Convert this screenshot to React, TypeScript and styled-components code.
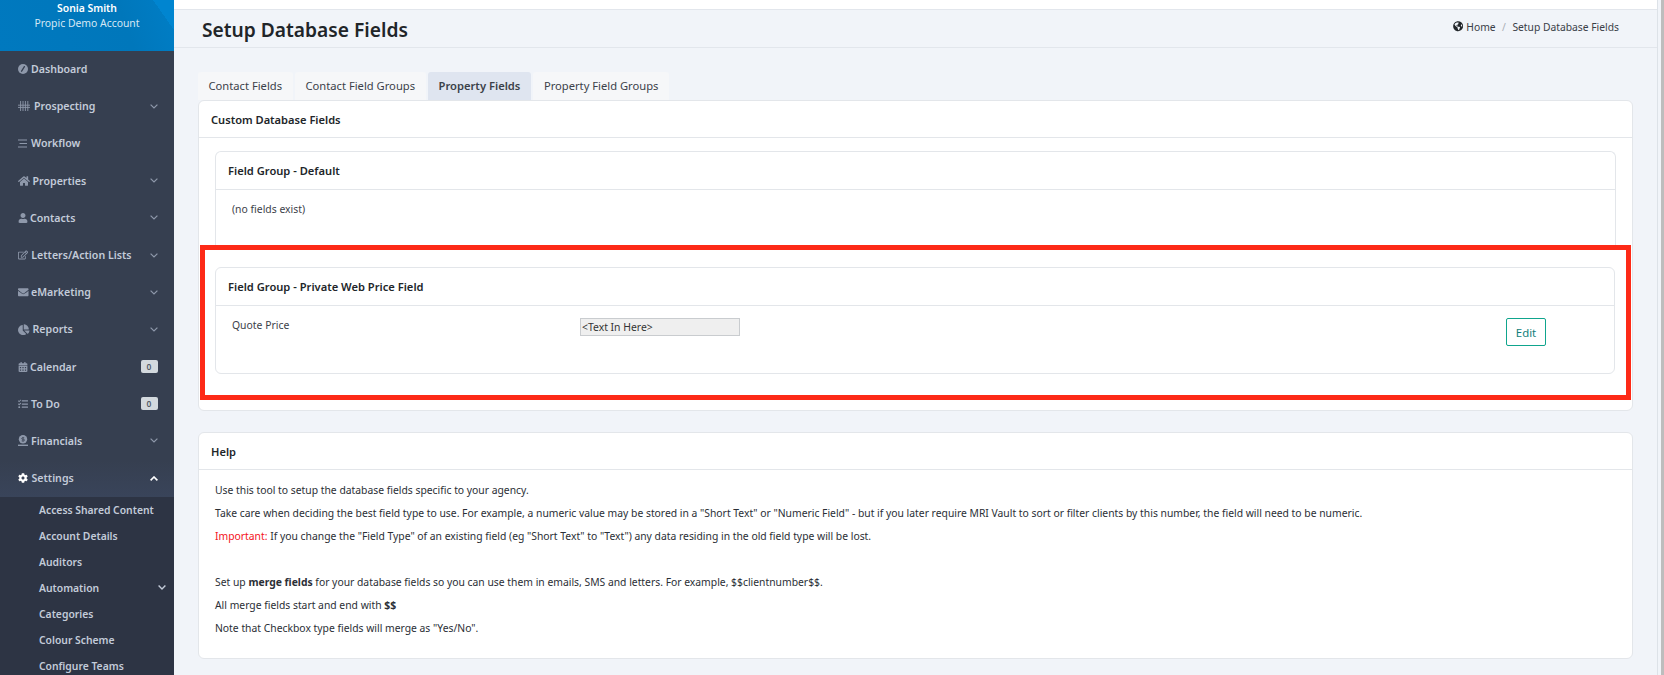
import React from "react";
import styled, { createGlobalStyle } from "styled-components";
import {
  FaCalendarAlt,
  FaChartPie,
  FaCog,
  FaEnvelope,
  FaGlobeAmericas,
  FaHome,
  FaRegEdit,
  FaTasks,
  FaUser,
} from "react-icons/fa";

const DialIcon = () => (
  <svg width="10" height="10" viewBox="0 0 10 10">
    <circle cx="5" cy="5" r="5" fill="currentColor" />
    <path d="M3.6 7.2 6.4 2.6" stroke="#363f50" strokeWidth="1.3" strokeLinecap="round" />
  </svg>
);

const TallyIcon = () => (
  <svg width="12" height="10" viewBox="0 0 12 10" fill="none" stroke="currentColor" strokeWidth="0.9">
    <path d="M2.6 0v10M5 0v10M7.4 0v10M9.8 0v10M0 4.2h12M0 6.4h12" />
  </svg>
);

const LinesIcon = () => (
  <svg width="9" height="9" viewBox="0 0 9 9" fill="none" stroke="currentColor" strokeWidth="1">
    <path d="M0 1h9M1.5 4.5h7.5M0 8h9" />
  </svg>
);

const FinanceIcon = () => (
  <svg width="10" height="11" viewBox="0 0 10 11">
    <circle cx="5" cy="4.3" r="4.2" fill="currentColor" />
    <path d="M6.3 2.8H4.2a.8.8 0 0 0 0 1.5h1.5a.8.8 0 0 1 0 1.6H3.6M5 1.9v4.9" fill="none" stroke="#363f50" strokeWidth="0.7" />
    <path d="M0 9.6h10V11H0z" fill="currentColor" />
  </svg>
);

const Chevron = ({ up, weight = 1.2 }: { up?: boolean; weight?: number }) => (
  <svg width="8" height="5" viewBox="0 0 8 5" fill="none" stroke="currentColor" strokeWidth={weight}>
    <path d={up ? "M.6 4.4 4 1l3.4 3.4" : "M.6.6 4 4 7.4.6"} />
  </svg>
);

const menu = [
  { label: "Dashboard", icon: <DialIcon /> },
  { label: "Prospecting", icon: <TallyIcon />, gap: 4, arrow: true },
  { label: "Workflow", icon: <LinesIcon />, gap: 4 },
  { label: "Properties", icon: <FaHome />, size: 12, gap: 2.6, arrow: true },
  { label: "Contacts", icon: <FaUser />, size: 10, gap: 2, arrow: true },
  { label: "Letters/Action Lists", icon: <FaRegEdit />, size: 10, gap: 3.3, arrow: true },
  { label: "eMarketing", icon: <FaEnvelope />, size: 10.5, gap: 2.5, arrow: true },
  { label: "Reports", icon: <FaChartPie />, size: 11.5, gap: 3, arrow: true },
  { label: "Calendar", icon: <FaCalendarAlt />, size: 10, gap: 2, badge: "0" },
  { label: "To Do", icon: <FaTasks />, size: 10, badge: "0" },
  { label: "Financials", icon: <FinanceIcon />, arrow: true },
];

const subMenu = [
  "Access Shared Content",
  "Account Details",
  "Auditors",
  "Automation",
  "Categories",
  "Colour Scheme",
  "Configure Teams",
];

const tabs = ["Contact Fields", "Contact Field Groups", "Property Fields", "Property Field Groups"];

const App: React.FC = () => {
  return (
    <Page>
      <GlobalStyle />
      <Sidebar>
        <Profile>
          <ProfileName>Sonia Smith</ProfileName>
          <ProfileAccount>Propic Demo Account</ProfileAccount>
        </Profile>
        <Menu>
          {menu.map((item) => (
            <MenuItem key={item.label}>
              <MenuIcon $size={item.size} $gap={item.gap}>
                {item.icon}
              </MenuIcon>
              <MenuLabel>{item.label}</MenuLabel>
              {item.arrow && (
                <Arrow>
                  <Chevron />
                </Arrow>
              )}
              {item.badge && <Badge>{item.badge}</Badge>}
            </MenuItem>
          ))}
          <ActiveItem>
            <MenuIcon $light $size={10} $gap={3.5}>
              <FaCog />
            </MenuIcon>
            <MenuLabel>Settings</MenuLabel>
            <Arrow $light>
              <Chevron up weight={1.6} />
            </Arrow>
          </ActiveItem>
          <SubMenu>
            {subMenu.map((label) => (
              <SubItem key={label}>
                {label}
                {label === "Automation" && (
                  <SubArrow>
                    <Chevron weight={1.4} />
                  </SubArrow>
                )}
              </SubItem>
            ))}
          </SubMenu>
        </Menu>
      </Sidebar>
      <Main>
        <TopBar />
        <PageHeader>
          <Title>Setup Database Fields</Title>
          <Breadcrumb>
            <FaGlobeAmericas />
            <span>Home</span>
            <Slash>/</Slash>
            <span>Setup Database Fields</span>
          </Breadcrumb>
        </PageHeader>
        <Content>
          <Tabs>
            {tabs.map((tab) => (
              <Tab key={tab} $active={tab === "Property Fields"}>
                {tab}
              </Tab>
            ))}
          </Tabs>
          <FieldsCard>
            <CardHeader>Custom Database Fields</CardHeader>
            <FieldsBody>
              <DefaultGroup>
                <GroupHeader>Field Group - Default</GroupHeader>
                <EmptyNote>(no fields exist)</EmptyNote>
              </DefaultGroup>
              <Highlight>
                <PriceGroup>
                  <GroupHeader>Field Group - Private Web Price Field</GroupHeader>
                  <FieldRow>
                    <FieldName>Quote Price</FieldName>
                    <FieldInput>&lt;Text In Here&gt;</FieldInput>
                    <EditButton>Edit</EditButton>
                  </FieldRow>
                </PriceGroup>
              </Highlight>
            </FieldsBody>
          </FieldsCard>
          <HelpCard>
            <CardHeader>Help</CardHeader>
            <HelpBody>
              <HelpLine>Use this tool to setup the database fields specific to your agency.</HelpLine>
              <HelpLine>
                Take care when deciding the best field type to use. For example, a numeric value may be stored in a
                "Short Text" or "Numeric Field" - but if you later require MRI Vault to sort or filter clients by this
                number, the field will need to be numeric.
              </HelpLine>
              <HelpLine>
                <Important>Important:</Important> If you change the "Field Type" of an existing field (eg "Short Text"
                to "Text") any data residing in the old field type will be lost.
              </HelpLine>
              <HelpLine>&nbsp;</HelpLine>
              <HelpLine>
                Set up <b>merge fields</b> for your database fields so you can use them in emails, SMS and letters. For
                example, $$clientnumber$$.
              </HelpLine>
              <HelpLine>
                All merge fields start and end with <b>$$</b>
              </HelpLine>
              <HelpLine>Note that Checkbox type fields will merge as "Yes/No".</HelpLine>
            </HelpBody>
          </HelpCard>
        </Content>
      </Main>
      <ScrollTrack />
    </Page>
  );
};

const GlobalStyle = createGlobalStyle`
  html, body {
    margin: 0;
    height: 100%;
    overflow: hidden;
  }
  body {
    font-family: "Noto Sans", "Open Sans", sans-serif;
    font-size: 10.4px;
    color: #212529;
  }
`;

const Page = styled.div`
  display: flex;
  width: 1664px;
  height: 675px;
  overflow: hidden;
  background: #f1f4f9;
`;

const Sidebar = styled.aside`
  width: 174px;
  flex-shrink: 0;
  background: #363f50;
  overflow: hidden;
`;

const Profile = styled.div`
  height: 51px;
  text-align: center;
  color: #fff;
  background:
    linear-gradient(55deg, transparent 90%, #0085d0 90%),
    linear-gradient(70deg, #0079bf 0%, #0077bb 70%, #007ec6 100%);
`;

const ProfileName = styled.div`
  font-size: 10.4px;
  font-weight: 600;
  line-height: 16px;
`;

const ProfileAccount = styled.div`
  font-size: 10.4px;
  line-height: 16px;
  margin-top: -1px;
  color: #d5e8f5;
`;

const Menu = styled.nav`
  display: flex;
  flex-direction: column;
`;

const MenuItem = styled.div`
  display: flex;
  align-items: center;
  height: 37.2px;
  padding: 0 16.5px 1px 18px;
  box-sizing: border-box;
  color: #c3cbd9;
  font-size: 10.6px;
  font-weight: 600;
`;

const ActiveItem = styled(MenuItem)`
  height: 37px;
  background: linear-gradient(180deg, #363f50, #39445a);
`;

const MenuIcon = styled.span<{ $light?: boolean; $size?: number; $gap?: number }>`
  display: inline-flex;
  align-items: center;
  justify-content: center;
  margin-right: ${(p) => p.$gap ?? 3}px;
  font-size: ${(p) => p.$size ?? 10.5}px;
  color: ${(p) => (p.$light ? "#ffffff" : "#8e98aa")};
`;

const MenuLabel = styled.span`
  flex: 1;
  white-space: nowrap;
`;

const Arrow = styled.span<{ $light?: boolean }>`
  display: inline-flex;
  color: ${(p) => (p.$light ? "#ffffff" : "#8e98aa")};
`;

const Badge = styled.span`
  width: 17px;
  height: 13px;
  border-radius: 2px;
  background: #d3d9de;
  color: #555d68;
  font-size: 8.5px;
  line-height: 13px;
  text-align: center;
`;

const SubMenu = styled.div`
  display: flex;
  flex-direction: column;
  background: #2d3444;
`;

const SubItem = styled.div`
  position: relative;
  height: 26px;
  line-height: 26px;
  padding-left: 39px;
  color: #c3cbd9;
  font-size: 10.35px;
  font-weight: 600;
  white-space: nowrap;
`;

const SubArrow = styled.span`
  position: absolute;
  right: 8px;
  top: 10px;
  display: flex;
  color: #c3cbd9;
`;

const Main = styled.main`
  flex: 1;
  min-width: 0;
  display: flex;
  flex-direction: column;
  border-right: 1px solid #dde2e8;
`;

const TopBar = styled.div`
  height: 9px;
  background: #fff;
  border-bottom: 1px solid #e2e6ec;
  flex-shrink: 0;
`;

const PageHeader = styled.header`
  height: 37px;
  flex-shrink: 0;
  display: flex;
  align-items: center;
  justify-content: space-between;
  padding: 0 38px 0 28px;
  border-bottom: 1px solid #e2e6ec;
`;

const Title = styled.h1`
  margin: 2px 0 0;
  font-size: 19.2px;
  font-weight: 600;
  color: #212529;
`;

const Breadcrumb = styled.div`
  display: flex;
  align-items: center;
  gap: 3px;
  margin-bottom: 4px;
  font-size: 10.3px;
  color: #3a4048;
  svg {
    color: #212529;
  }
`;

const Slash = styled.span`
  margin: 0 3.5px;
  color: #a9aeb5;
`;

const Content = styled.div`
  padding: 24px 24px 0;
  display: flex;
  flex-direction: column;
`;

const Tabs = styled.div`
  display: flex;
  gap: 2.5px;
`;

const Tab = styled.div<{ $active?: boolean }>`
  height: 28px;
  line-height: 28px;
  padding: 0 10.5px;
  border-radius: 3px 3px 0 0;
  font-size: 11.2px;
  white-space: nowrap;
  font-weight: ${(p) => (p.$active ? 600 : 400)};
  color: #3b4149;
  background: ${(p) => (p.$active ? "#dfe5f0" : "#f6f7f9")};
`;

const Card = styled.section`
  background: #fff;
  border: 1px solid #e3e6ea;
  border-radius: 6px;
`;

const FieldsCard = styled(Card)`
  height: 311px;
  box-sizing: border-box;
`;

const HelpCard = styled(Card)`
  height: 227px;
  box-sizing: border-box;
  margin-top: 21px;
`;

const CardHeader = styled.div`
  height: 37px;
  box-sizing: border-box;
  padding: 0 12px;
  display: flex;
  align-items: center;
  border-bottom: 1px solid #e3e6ea;
  font-size: 11.1px;
  font-weight: 600;
  color: #212529;
`;

const FieldsBody = styled.div`
  padding: 13px 0 0;
`;

const DefaultGroup = styled.div`
  margin: 0 16px;
  height: 94px;
  box-sizing: border-box;
  border: 1px solid #e3e6ea;
  border-bottom: none;
  border-radius: 6px 6px 0 0;
`;

const Highlight = styled.div`
  border: 5px solid #fd2a17;
  margin: 0 1px;
  height: 155px;
  box-sizing: border-box;
  padding: 17px 11px 0 10px;
`;

const PriceGroup = styled.div`
  height: 107px;
  box-sizing: border-box;
  border: 1px solid #e3e6ea;
  border-radius: 6px;
`;

const GroupHeader = styled.div`
  height: 38px;
  box-sizing: border-box;
  padding: 0 12px 1px;
  display: flex;
  align-items: center;
  border-bottom: 1px solid #e3e6ea;
  font-size: 11.15px;
  font-weight: 600;
  color: #212529;
`;

const EmptyNote = styled.div`
  padding: 12px 16px;
  font-size: 10.4px;
  color: #3b4149;
`;

const FieldRow = styled.div`
  display: flex;
  align-items: flex-start;
  padding: 12px 0 0 16px;
`;

const FieldName = styled.div`
  width: 348px;
  font-size: 10.4px;
  color: #3b4149;
`;

const FieldInput = styled.div`
  width: 160px;
  height: 18px;
  box-sizing: border-box;
  border: 1px solid #c9cccf;
  background: #efefef;
  padding-left: 1px;
  font-size: 10.4px;
  line-height: 16px;
  color: #333;
  margin-right: 766px;
`;

const EditButton = styled.button`
  width: 40px;
  height: 28px;
  padding: 0;
  background: #fff;
  border: 1px solid #0fa58d;
  border-radius: 2px;
  color: #0f7e7a;
  font-family: inherit;
  font-size: 11.4px;
`;

const HelpBody = styled.div`
  padding: 9px 16px 0;
`;

const HelpLine = styled.p`
  margin: 0;
  height: 23px;
  line-height: 23px;
  font-size: 10.35px;
  color: #2b2f36;
  white-space: nowrap;
`;

const Important = styled.span`
  color: #f4121c;
`;

const ScrollTrack = styled.div`
  width: 6px;
  flex-shrink: 0;
  background: linear-gradient(90deg, #f1f4f9 0 3px, #bdbdbd 3px);
`;

export default App;
